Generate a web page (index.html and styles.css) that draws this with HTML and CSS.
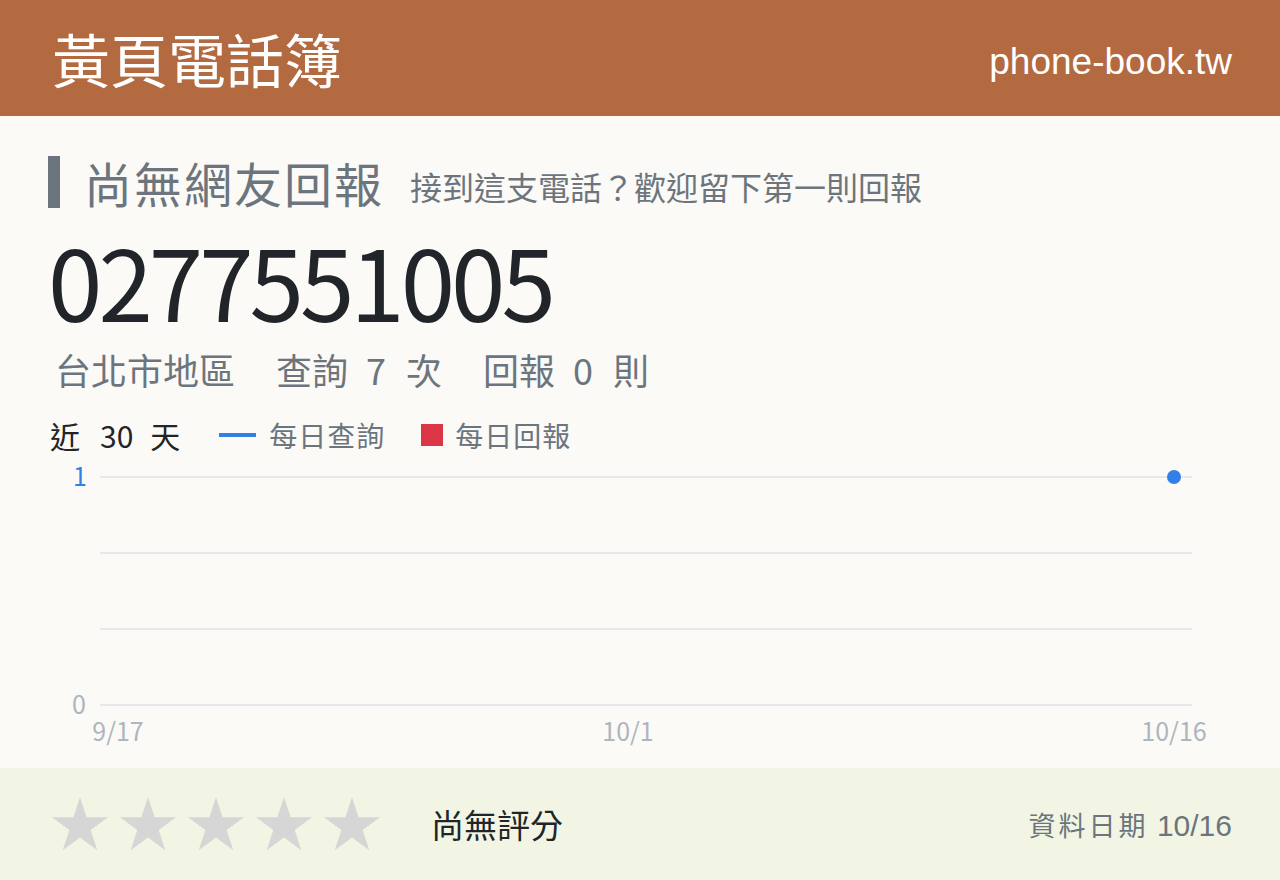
FILE: index.html
```html
<!DOCTYPE html>
<html lang="zh-Hant">
<head>
    <meta charset="UTF-8">
    <meta name="viewport" content="width=device-width, initial-scale=1.0">
    <title>0277551005 - 黃頁電話簿</title>
    <link rel="stylesheet" href="styles.css">
</head>
<body>
<header class="topbar">
    <div class="brand">黃頁電話簿</div>
    <div class="site">phone-book.tw</div>
</header>

<main class="content">
    <div class="status">
        <h1 class="status-title">尚無網友回報</h1>
        <span class="status-hint">接到這支電話？歡迎留下第一則回報</span>
    </div>

    <div class="number">0277551005</div>

    <div class="stats">
        <span class="stat">台北市地區</span>
        <span class="stat">查詢<span class="num">7</span>次</span>
        <span class="stat">回報<span class="num">0</span>則</span>
    </div>

    <div class="legend">
        <span class="range">近<span class="num">30</span>天</span>
        <span class="key"><i class="key-line"></i>每日查詢</span>
        <span class="key"><i class="key-box"></i>每日回報</span>
    </div>

    <svg class="chart" width="1184" height="300" viewBox="0 0 1184 300">
        <g class="grid">
            <line x1="52" y1="20" x2="1144" y2="20"></line>
            <line x1="52" y1="96" x2="1144" y2="96"></line>
            <line x1="52" y1="172" x2="1144" y2="172"></line>
            <line x1="52" y1="248" x2="1144" y2="248"></line>
        </g>
        <text class="tick tick-top" x="39" y="29" text-anchor="end">1</text>
        <text class="tick" x="38" y="257" text-anchor="end">0</text>
        <text class="tick" x="70" y="284" text-anchor="middle">9/17</text>
        <text class="tick" x="580" y="284" text-anchor="middle">10/1</text>
        <text class="tick" x="1126" y="284" text-anchor="middle">10/16</text>
        <circle class="dot" cx="1126" cy="20" r="7"></circle>
    </svg>
</main>

<footer class="bottombar">
    <div class="stars">
        <svg class="star" viewBox="0 0 56 54"><polygon points="28,0 34.6,20.3 56,20.3 38.7,32.9 45.3,53.2 28,40.6 10.7,53.2 17.3,32.9 0,20.3 21.4,20.3"></polygon></svg>
        <svg class="star" viewBox="0 0 56 54"><polygon points="28,0 34.6,20.3 56,20.3 38.7,32.9 45.3,53.2 28,40.6 10.7,53.2 17.3,32.9 0,20.3 21.4,20.3"></polygon></svg>
        <svg class="star" viewBox="0 0 56 54"><polygon points="28,0 34.6,20.3 56,20.3 38.7,32.9 45.3,53.2 28,40.6 10.7,53.2 17.3,32.9 0,20.3 21.4,20.3"></polygon></svg>
        <svg class="star" viewBox="0 0 56 54"><polygon points="28,0 34.6,20.3 56,20.3 38.7,32.9 45.3,53.2 28,40.6 10.7,53.2 17.3,32.9 0,20.3 21.4,20.3"></polygon></svg>
        <svg class="star" viewBox="0 0 56 54"><polygon points="28,0 34.6,20.3 56,20.3 38.7,32.9 45.3,53.2 28,40.6 10.7,53.2 17.3,32.9 0,20.3 21.4,20.3"></polygon></svg>
    </div>
    <div class="rating">尚無評分</div>
    <div class="updated"><span class="updated-label">資料日期</span> 10/16</div>
</footer>
</body>
</html>
```

FILE: styles.css
```css
body {
    margin: 0;
    width: 1280px;
    height: 880px;
    overflow: hidden;
    background-color: #fbfaf6;
    font-family: "Noto Sans CJK TC", "Noto Sans", sans-serif;
    color: #212529;
}
.topbar {
    height: 116px;
    padding: 0 48px 0 52px;
    background-color: #b46a40;
    color: #fff;
    display: flex;
    align-items: center;
    justify-content: space-between;
}
.brand {
    font-size: 58px;
    line-height: 1;
}
.site {
    margin-top: 8px;
    font-family: "Liberation Sans", Arial, sans-serif;
    font-size: 37px;
}
.content {
    height: 652px;
    padding: 0 48px;
}
.status {
    display: flex;
    align-items: baseline;
    padding-top: 40px;
}
.status-title {
    margin: 0;
    padding-left: 24px;
    border-left: 12px solid #6c757d;
    font-size: 48px;
    font-weight: normal;
    line-height: 52px;
    letter-spacing: 2px;
    color: #6c757d;
}
.status-hint {
    margin-left: 26px;
    font-size: 32px;
    color: #6c757d;
    position: relative;
    top: -3px;
}
.number {
    margin-top: -4px;
    font-size: 98px;
    line-height: 142px;
    letter-spacing: -4px;
}
.stats {
    display: flex;
    gap: 41px;
    margin-top: -5px;
    padding-left: 7px;
    font-size: 36px;
    line-height: 48px;
    color: #6c757d;
}
.stats .num {
    margin: 0 20px 0 18px;
}
.legend {
    display: flex;
    align-items: center;
    margin-top: 20px;
    padding-left: 2px;
    height: 44px;
}
.range {
    font-size: 30px;
    margin-right: 39px;
}
.range .num {
    margin: 0 17px 0 20px;
}
.key {
    display: flex;
    align-items: center;
    margin-right: 36px;
    font-size: 28px;
    letter-spacing: 1px;
    color: #6c757d;
}
.key-line {
    display: inline-block;
    width: 37px;
    height: 4px;
    margin-right: 13px;
    background-color: #3080e8;
}
.key-box {
    display: inline-block;
    width: 22px;
    height: 22px;
    margin-right: 12px;
    background-color: #dc3545;
}
.chart {
    display: block;
    margin-top: 0;
}
.grid line {
    stroke: #e6e8ec;
    stroke-width: 2;
}
.tick {
    font-size: 25px;
    fill: #adb5bd;
}
.tick-top {
    fill: #3080e8;
}
.dot {
    fill: #3080e8;
}
.bottombar {
    height: 112px;
    padding: 0 48px 0 52px;
    background-color: #f2f5e3;
    display: flex;
    align-items: center;
}
.stars {
    display: flex;
    gap: 12px;
}
.star {
    width: 56px;
    height: 54px;
    fill: #d6d6d6;
}
.rating {
    margin-left: 51px;
    font-size: 33px;
}
.updated {
    margin-left: auto;
    font-family: "Liberation Sans", "Noto Sans CJK TC", sans-serif;
    font-size: 30px;
    color: #6c757d;
}
.updated-label {
    font-family: "Noto Sans CJK TC", sans-serif;
    font-size: 27px;
    letter-spacing: 3px;
}
```
